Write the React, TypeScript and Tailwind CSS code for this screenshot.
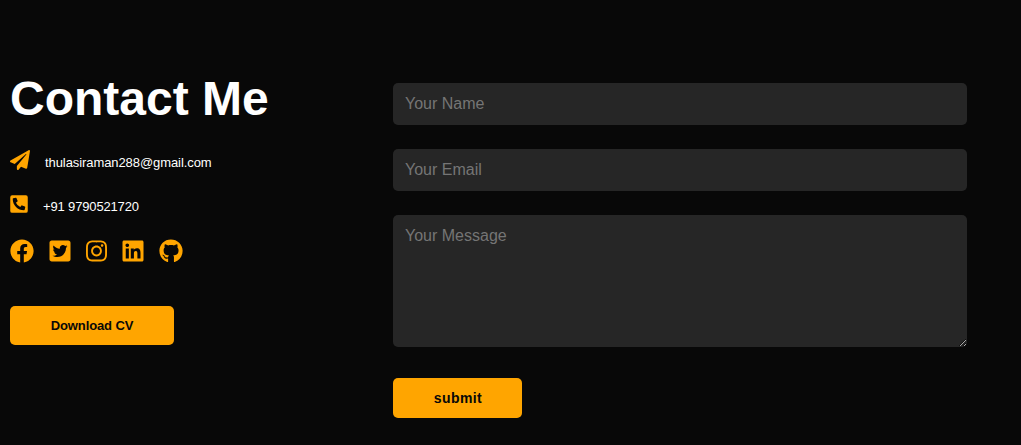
import {
  FaPaperPlane,
  FaFacebook,
  FaTwitterSquare,
  FaInstagram,
  FaLinkedin,
  FaGithub,
  FaPhoneSquareAlt,
} from "react-icons/fa";

const fieldClass =
  "mb-6 h-[42px] w-full rounded-[5px] bg-[#262626] px-3 text-base outline-none placeholder:text-[#757575]";

export default function App() {
  return (
    <main className="flex h-[445px] w-[1021px] overflow-hidden bg-[#080808] pl-2.5 font-['Liberation_Sans',Arial,sans-serif] text-white">
      <section className="w-[383px] shrink-0 pt-[71px]">
        <h1 className="text-[48px] leading-[55px] font-semibold">Contact Me</h1>
        <p className="mt-6 flex h-[25px] items-start text-[13px] leading-[25px] tracking-[-0.08px]">
          <FaPaperPlane className="mr-[15px] size-5 text-[#ffa500]" />
          thulasiraman288@gmail.com
        </p>
        <p className="mt-[19px] flex h-[25px] items-start text-[13px] leading-[25px] tracking-[-0.15px]">
          <FaPhoneSquareAlt className="mr-[15px] h-5 w-[18px] text-[#ffa500]" />
          +91 9790521720
        </p>
        <div className="mt-5 flex gap-[15px] text-[#ffa500]">
          <FaFacebook className="size-6" />
          <FaTwitterSquare className="h-6 w-[22px]" />
          <FaInstagram className="h-6 w-[21px]" />
          <FaLinkedin className="h-6 w-[22px]" />
          <FaGithub className="size-6" />
        </div>
        <button className="mt-[43px] h-[39px] w-[164px] rounded-[5px] bg-[#ffa500] text-[13px] font-semibold tracking-[-0.12px] text-[#080808]">
          Download CV
        </button>
      </section>
      <form className="flex w-[574px] flex-col items-start pt-[83px]">
        <input placeholder="Your Name" className={fieldClass} />
        <input placeholder="Your Email" className={fieldClass} />
        <textarea
          placeholder="Your Message"
          className="mb-[31px] h-[132px] w-full rounded-[5px] bg-[#262626] px-3 py-3 text-base leading-[18px] outline-none placeholder:text-[#757575]"
        />
        <button type="button" className="h-10 w-[129px] rounded-[5px] bg-[#ffa500] pl-px text-sm font-semibold tracking-[0.4px] text-[#080808]">
          submit
        </button>
      </form>
    </main>
  );
}
